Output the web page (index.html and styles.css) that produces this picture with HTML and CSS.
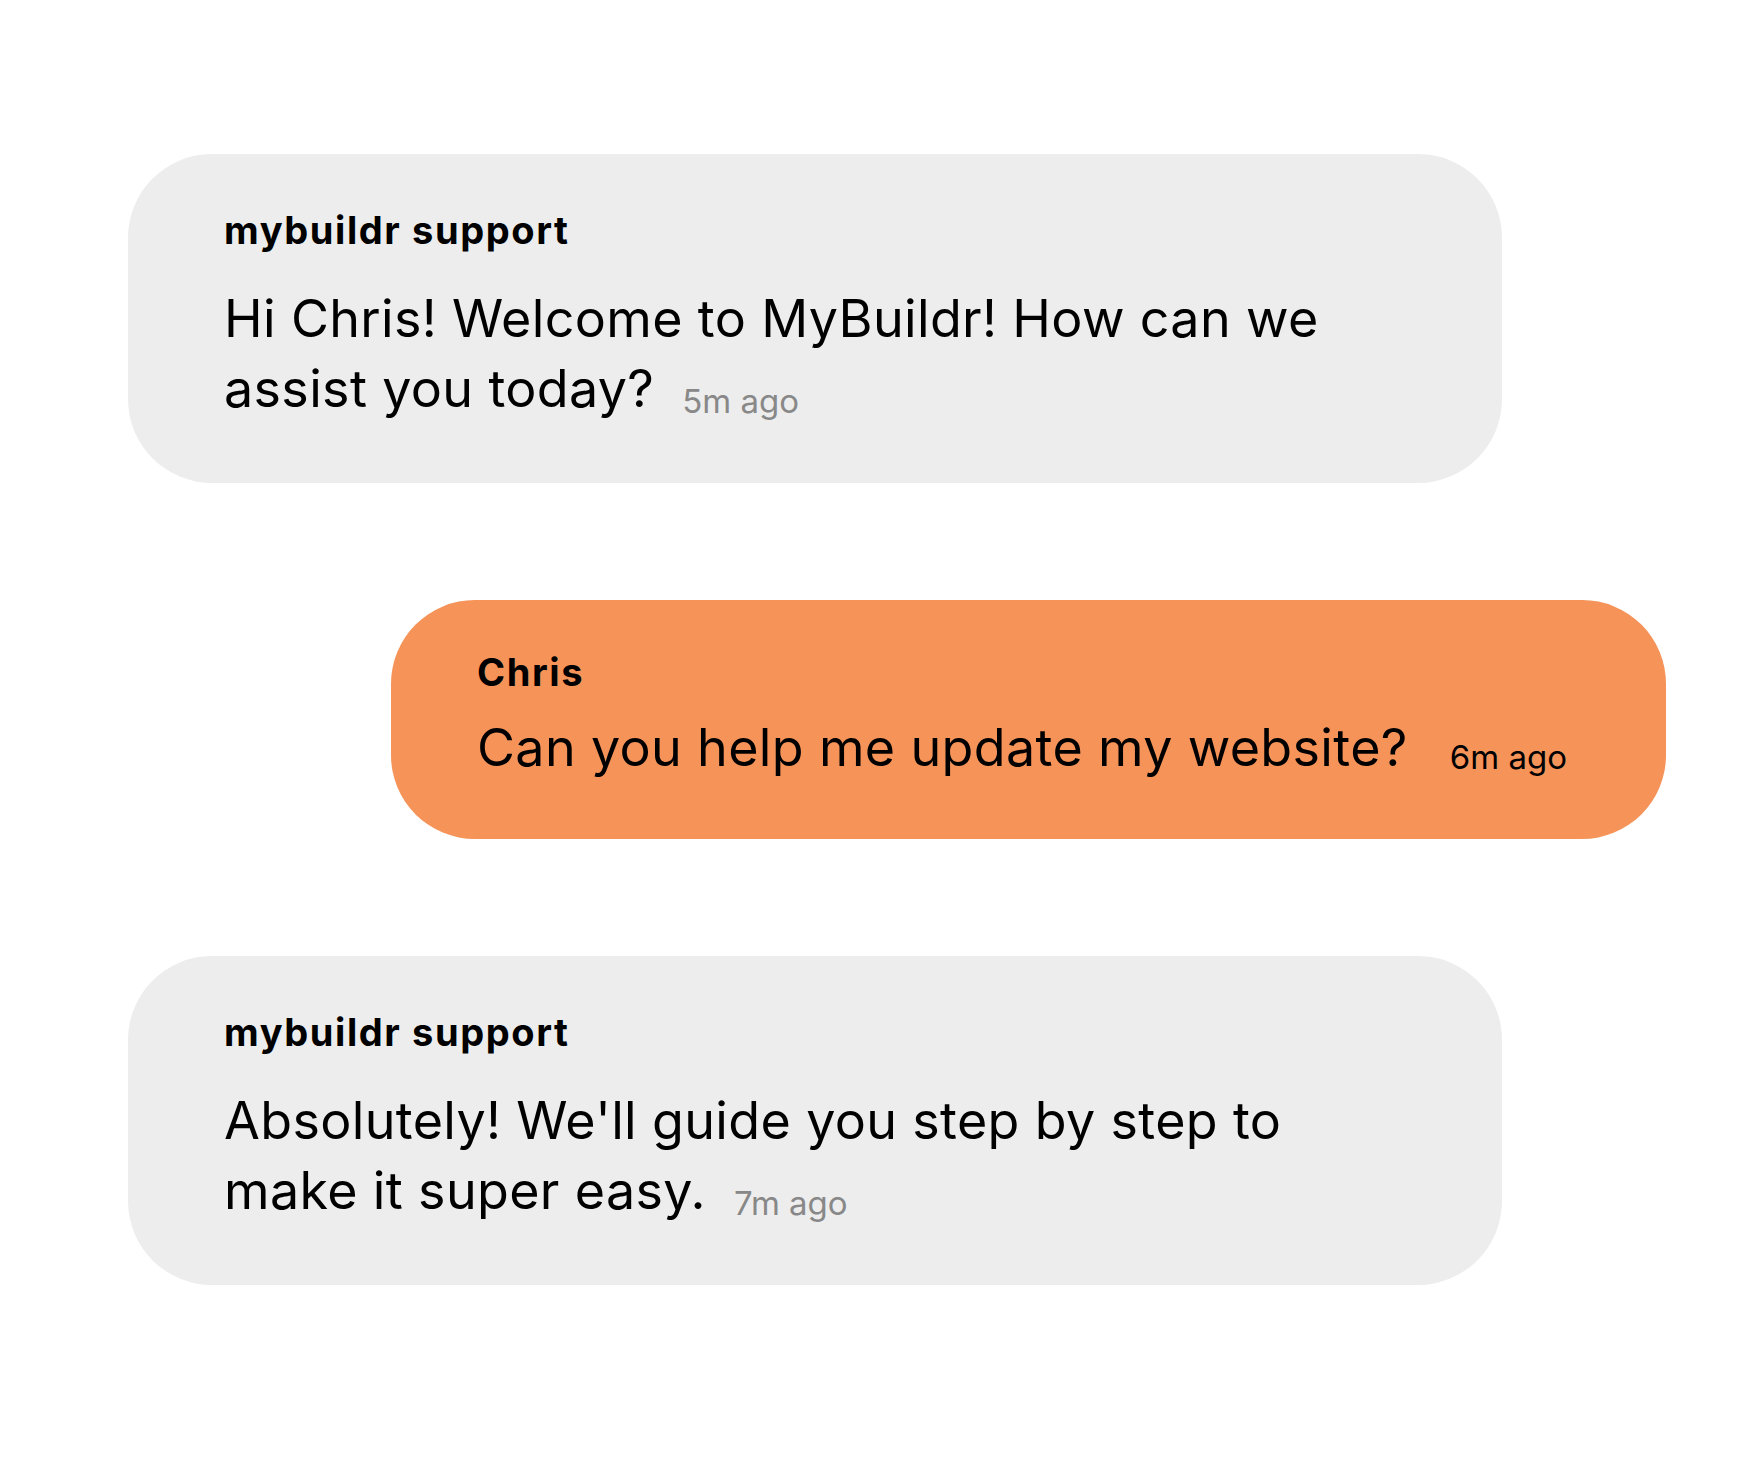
FILE: index.html
```html
<!DOCTYPE html>
<html lang="en">
<head>
<meta charset="utf-8">
<title>Chat</title>
<link rel="stylesheet" href="styles.css">
</head>
<body>
<main class="chat">
  <div class="bubble bubble-support">
    <div class="sender">mybuildr support</div>
    <p class="message">Hi Chris! Welcome to MyBuildr! How can we assist you today?<span class="time">5m ago</span></p>
  </div>
  <div class="bubble bubble-user">
    <div class="sender">Chris</div>
    <p class="message">Can you help me update my website?<span class="time">6m ago</span></p>
  </div>
  <div class="bubble bubble-support">
    <div class="sender">mybuildr support</div>
    <p class="message">Absolutely! We'll guide you step by step to make it super easy.<span class="time">7m ago</span></p>
  </div>
</main>
</body>
</html>
```

FILE: styles.css
```css
html, body {
  margin: 0;
  padding: 0;
  background: #ffffff;
}

body {
  font-family: "Inter", "Noto Sans", sans-serif;
  color: #000000;
}

.chat {
  display: flex;
  flex-direction: column;
  gap: 117px;
  padding: 154px 92px 0 128px;
}

.bubble {
  box-sizing: border-box;
  border-radius: 84px;
}

.bubble-support {
  width: 1374px;
  background: #ededed;
  padding: 56px 96px 59px 96px;
}

.bubble-user {
  align-self: flex-end;
  width: 1275px;
  background: #f59358;
  padding: 52px 86px 56px 86px;
}

.sender {
  font-size: 38px;
  line-height: 40px;
  font-weight: 700;
  letter-spacing: 1.6px;
}

.message {
  margin: 34px 0 0 0;
  font-size: 52px;
  line-height: 70px;
  font-weight: 400;
  letter-spacing: 0.35px;
}

.bubble-user .message {
  margin-top: 21px;
}

.time {
  display: inline-block;
  margin-left: 28px;
  font-size: 33px;
  line-height: 1;
  letter-spacing: 0;
  color: #888888;
  white-space: nowrap;
  vertical-align: -6px;
}

.bubble-user .time {
  margin-left: 42px;
  color: #000000;
  vertical-align: -3px;
}
```
